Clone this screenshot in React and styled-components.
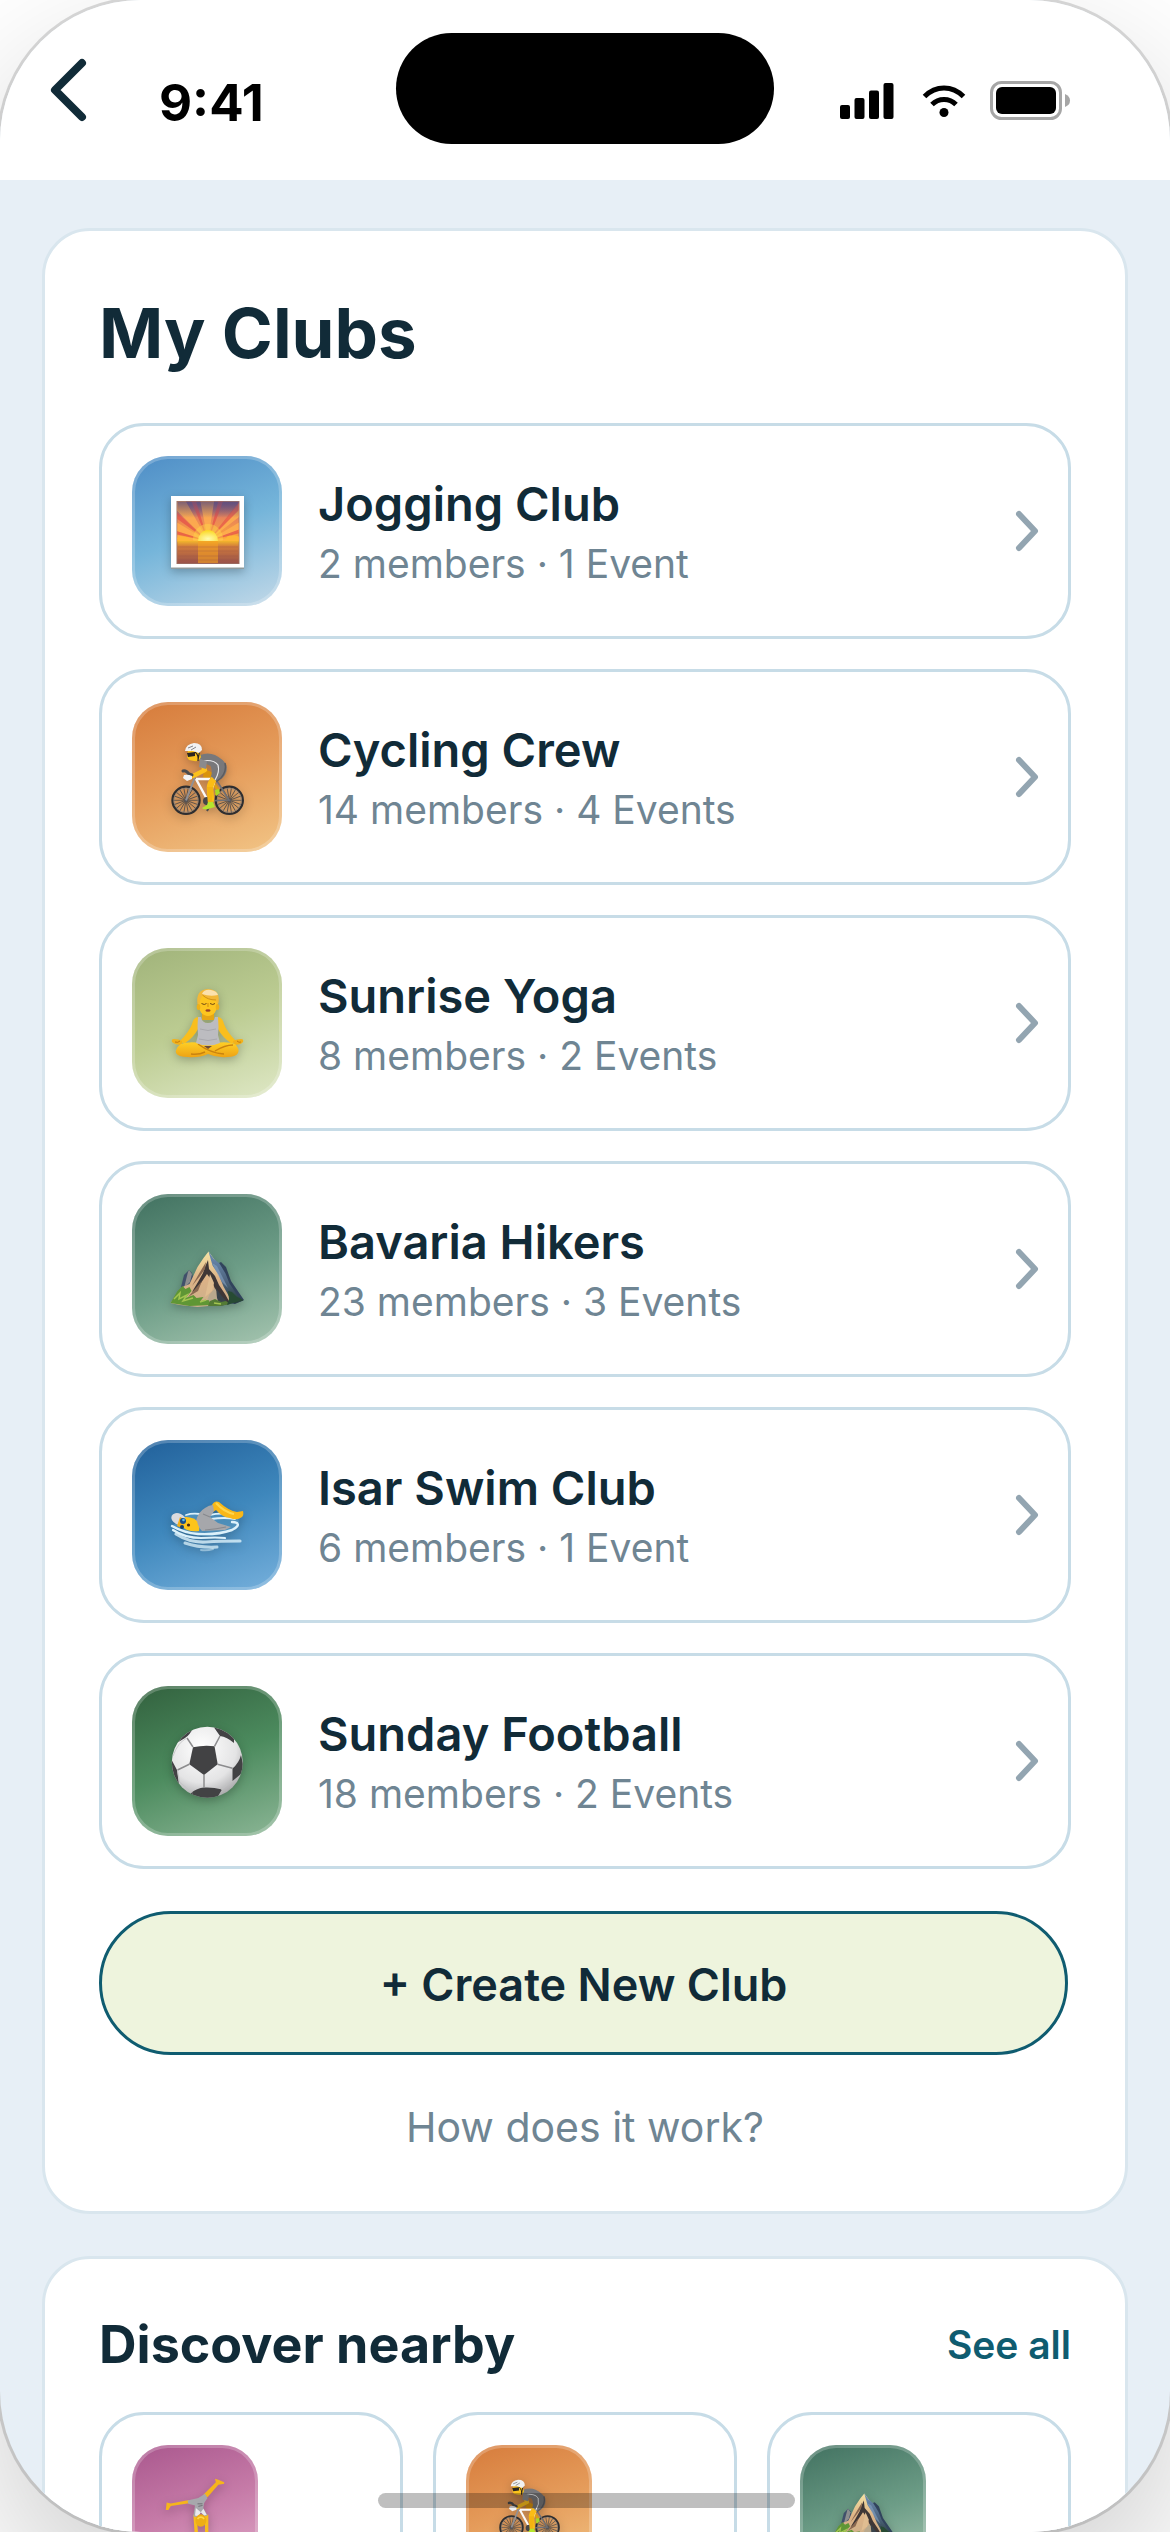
import React from 'react';
import styled, { createGlobalStyle } from 'styled-components';

const GlobalStyle = createGlobalStyle`
  * {
    box-sizing: border-box;
  }

  body {
    margin: 0;
    background: #fff;
    color: #112b38;
    font-family: Inter, "Liberation Sans", sans-serif;
  }

  h1, h2, p, ul {
    margin: 0;
    padding: 0;
  }

  svg {
    display: block;
    flex: none;
    overflow: visible;
  }
`;

const Backdrop = styled.div`
  height: 100vh;
  overflow: hidden;
  background: #fff;
`;

const Phone = styled.div`
  position: relative;
  display: flex;
  flex-direction: column;
  height: 100%;
  overflow: hidden;
  border-radius: 141px;
  background: #e7eff6;
  box-shadow: 0 0 0 3px rgba(0, 0, 0, 0.14), 0 60px 150px rgba(0, 0, 0, 0.2);
`;

const Header = styled.header`
  display: grid;
  grid-template-columns: 1fr 378px 1fr;
  flex: none;
  height: 180px;
  padding-top: 33px;
  background: #fff;
`;

const HeaderLeft = styled.div`
  display: flex;
  align-items: flex-start;
  gap: 63px;
  padding-left: 42px;
`;

const BackButton = styled.button`
  display: grid;
  place-items: center;
  width: 54px;
  height: 114px;
  padding: 0;
  border: 0;
  background: none;
  color: #112b38;
`;

const Time = styled.time`
  padding-top: 39px;
  font-size: 51px;
  font-weight: 700;
  line-height: 62px;
  color: #000;
`;

const Island = styled.div`
  height: 111px;
  border-radius: 56px;
  background: #000;
`;

const StatusIcons = styled.div`
  display: flex;
  align-items: center;
  gap: 27px;
  height: 135px;
  padding-left: 66px;
`;

const Scroller = styled.main`
  display: flex;
  flex-direction: column;
  gap: 42px;
  flex: 1;
  min-height: 0;
  padding: 48px 42px;
  overflow-y: auto;
  scrollbar-width: none;
`;

const Card = styled.section`
  flex: none;
  padding: ${(p) => (p.$compact ? '54px' : '60px 54px 54px')};
  border: 3px solid #d9e6ee;
  border-radius: 48px;
  background: #fff;
`;

const Title = styled.h1`
  font-size: 69px;
  font-weight: 700;
  line-height: 84px;
`;

const ClubList = styled.ul`
  display: flex;
  flex-direction: column;
  gap: 30px;
  margin: 48px 0 42px;
  list-style: none;
`;

const ClubRow = styled.button`
  display: flex;
  align-items: center;
  gap: 36px;
  width: 100%;
  padding: 30px;
  border: 3px solid #c7dce7;
  border-radius: 45px;
  background: #fff;
  color: inherit;
  font: inherit;
  text-align: left;
`;

const Tile = styled.span`
  display: grid;
  place-items: center;
  flex: none;
  width: ${(p) => p.$size}px;
  height: ${(p) => p.$size}px;
  border-radius: 36px;
  background: linear-gradient(160deg, ${(p) => p.$colors});
  box-shadow: inset 0 0 0 3px rgba(255, 255, 255, 0.22);

  svg {
    filter: drop-shadow(0 3px 5px rgba(0, 0, 0, 0.25));
  }
`;

const ClubText = styled.span`
  display: flex;
  flex-direction: column;
  flex: 1;
  min-width: 0;
`;

const ClubName = styled.span`
  font-size: 47px;
  font-weight: 600;
  line-height: 66px;
`;

const ClubMeta = styled.span`
  font-size: 39px;
  line-height: 54px;
  color: #6f8593;
`;

const CreateButton = styled.button`
  display: block;
  width: calc(100% - 3px);
  height: 144px;
  padding: 2px 0 0;
  border: 3px solid #0f5c70;
  border-radius: 72px;
  background: #eef4dd;
  color: #112b38;
  font-family: inherit;
  font-size: 45px;
  font-weight: 600;
`;

const HelpLink = styled.a`
  display: block;
  margin-top: 42px;
  font-size: 41px;
  line-height: 60px;
  text-align: center;
  text-decoration: none;
  color: #6f8593;
`;

const SectionHead = styled.div`
  display: flex;
  align-items: center;
  justify-content: space-between;
  margin-bottom: 36px;
`;

const SectionTitle = styled.h2`
  font-size: 52px;
  font-weight: 700;
  line-height: 63px;
`;

const SeeAll = styled.a`
  font-size: 39px;
  font-weight: 600;
  line-height: 54px;
  text-decoration: none;
  color: #0f5c70;
`;

const NearbyGrid = styled.div`
  display: grid;
  grid-template-columns: repeat(3, 1fr);
  gap: 30px;
`;

const NearbyCard = styled.button`
  display: flex;
  align-items: flex-start;
  min-height: 240px;
  padding: 30px;
  border: 3px solid #c7dce7;
  border-radius: 45px;
  background: #fff;
`;

const HomeBar = styled.div`
  position: absolute;
  bottom: 24px;
  left: 50%;
  width: 417px;
  height: 15px;
  margin-left: -207px;
  border-radius: 8px;
  background: rgba(0, 0, 0, 0.25);
`;

function Sunrise() {
  return (
    <>
      <defs>
        <linearGradient id="sky" x1="0" y1="0" x2="0" y2="1">
          <stop offset="0" stopColor="#6d5480" />
          <stop offset="0.4" stopColor="#e8845a" />
          <stop offset="1" stopColor="#ffab33" />
        </linearGradient>
        <linearGradient id="dusk" x1="0" y1="0" x2="0" y2="1">
          <stop offset="0" stopColor="#5f4d7c" stopOpacity="0.75" />
          <stop offset="1" stopColor="#5f4d7c" stopOpacity="0" />
        </linearGradient>
        <linearGradient id="sea" x1="0" y1="0" x2="0" y2="1">
          <stop offset="0" stopColor="#f2b52c" />
          <stop offset="0.25" stopColor="#d07a3c" />
          <stop offset="1" stopColor="#99524a" />
        </linearGradient>
        <radialGradient id="sun" cx="0.5" cy="0.8" r="0.8">
          <stop offset="0" stopColor="#fffbb0" />
          <stop offset="1" stopColor="#fbd61c" />
        </radialGradient>
        <clipPath id="skyClip">
          <path d="M6.300 6.800h61.400v39.500H6.300z" />
        </clipPath>
      </defs>
      <path d="M0 1h73v73H0z" fill="#8f9a9c" />
      <path d="M0 1h73v71.500H0z" fill="#fff" />
      <path d="M5.500 6h63v63h-63z" fill="#9b7065" />
      <path d="M6.300 6.800h61.400v40H6.300z" fill="url(#sky)" />
      <g clipPath="url(#skyClip)">
        <g fill="#ffb04f" opacity="0.8">
          <path d="M37 46 27-6h18zM37 46-2 8l10-14zM37 46 78-4l8 12zM37 46-12 30l4-11zM37 46 84 18l4 13zM37 46-12 43v-6zM37 46l52-8v6z" />
        </g>
        <g fill="#e4524a" opacity="0.75">
          <path d="M37 46 16-4h6zM37 46 50-4h6zM37 46-6 15l3-6zM37 46 72 2l5 4zM37 46-10 36l2-4zM37 46 80 30l1 5z" />
        </g>
        <path d="M6.300 6.800h61.400v16H6.300z" fill="url(#dusk)" />
        <circle cx="37" cy="44" r="15" fill="#ffd84a" opacity="0.45" />
      </g>
      <path d="M6.300 46v-3q3-3 6-1 4-1 6 2l5 2zM67.700 46v-4q-4-3-7-1-4-1-6 3l-4 2z" fill="#ffb637" />
      <path d="M6.300 46h61.400v22.300H6.300z" fill="url(#sea)" />
      <path d="M27 46h20v22H27z" fill="#f6a11f" opacity="0.6" />
      <path d="M7 52h60M7 56h60M7 61h60M7 65h60" stroke="#8d4c48" strokeWidth="0.700" opacity="0.4" />
      <path d="M27 46a10 11 0 0 1 20 0z" fill="url(#sun)" />
    </>
  );
}

function Wheel({ cx }) {
  const spokes = [0, 20, 40, 60, 80, 100, 120, 140, 160];
  return (
    <g transform={`translate(${cx} 59.300)`}>
      {spokes.map((angle) => (
        <path key={angle} d="M-13 0h26" stroke="#4e4a48" strokeWidth="0.800" transform={`rotate(${angle})`} />
      ))}
      <circle r="13.600" fill="none" stroke="#2e2e30" strokeWidth="2.200" />
      <circle r="12.100" fill="none" stroke="#85807d" strokeWidth="0.700" />
      <circle r="1.800" fill="#55555a" />
    </g>
  );
}

function Cyclist() {
  return (
    <>
      <Wheel cx={15} />
      <Wheel cx={58.3} />
      <path d="M33 29q6 0 9 4l-4 6-6-3z" fill="#d9930c" />
      <path d="m43 43 4 6-2 5" fill="none" stroke="#e0a010" strokeWidth="3" />
      <path d="m44 49 4-1 1 4-4 3z" fill="#a5d92a" />
      <path d="m46 40 12 19-21 1" fill="none" stroke="#707074" strokeWidth="1.600" />
      <path d="M24 36 15 59.300" stroke="#909094" strokeWidth="2" />
      <path d="m25 38 12 22M25 38h19l-7 22" fill="none" stroke="#fafafa" strokeWidth="2.400" />
      <circle cx="36" cy="60" r="4" fill="#464648" />
      <path d="m39 64-3 6" stroke="#4a4a4d" strokeWidth="2" />
      <path d="M29 14q8-3 15 0 8 4 11.500 10 1.500 8-4 13l-7 4-6-2q4-7 1-14l-11-5z" fill="#78787b" />
      <path d="M30 20q13-2 17 4 2 7-3 15" fill="none" stroke="#e9e9eb" strokeWidth="1.200" />
      <path d="M54 22q2 8-4 15l-5 4" fill="none" stroke="#5c5c60" strokeWidth="1.500" />
      <path d="m31 24 3 5-12 6" fill="none" stroke="#fcc11c" strokeWidth="4.300" strokeLinecap="round" strokeLinejoin="round" />
      <path d="m29 18 7 2-1 8-7-2z" fill="#8a8a8d" />
      <path d="M43 38q-4 4-4 9l1 14" fill="none" stroke="#fbbd16" strokeWidth="6.500" strokeLinejoin="round" />
      <path d="m36 46 1.500 16h3l2-16z" fill="#f0ab0e" opacity="0.6" />
      <path d="m37 61 5 0 2 5-7 2q-5 1-6-1l5-3z" fill="#b5e52d" />
      <path d="M12 30q3-1 6 3l3 1" fill="none" stroke="#4a4a4d" strokeWidth="3" strokeLinecap="round" />
      <path d="M13 34q4-1 8 1v3l-5 2-4-3z" fill="#f2f2f4" />
      <path d="M17 10h11l2 6q-2 5-7 4l-5-1-2-3z" fill="#fbc31d" />
      <path d="m16 12 8-1v4l-7 1z" fill="#2a2522" />
      <path d="M24 11q4 3 3 9M29 8l-2 11" fill="none" stroke="#2a2522" strokeWidth="1.200" />
      <path d="M14 10q1-7 9-8 8 0 8 7l-3 3-6-2z" fill="#f1f1f2" />
      <path d="m17 7 5-2M20 9l5-3" stroke="#77777a" strokeWidth="0.900" />
    </>
  );
}

function Yoga() {
  return (
    <>
      <defs>
        <linearGradient id="skin" x1="0" y1="0" x2="0" y2="1">
          <stop offset="0" stopColor="#ffcf25" />
          <stop offset="1" stopColor="#eea315" />
        </linearGradient>
      </defs>
      <path d="M31 25h12v8H31z" fill="#e6a615" />
      <path d="M27 30q-5 1-6 7-3 8-12 17l4 3q10-7 14-15zM47 30q5 1 6 7 3 8 12 17l-4 3q-10-7-14-15z" fill="#f9be1d" />
      <path d="M11 58q-7 0-10-3-1-3 2-3 5 0 8 2zM63 58q7 0 9-3 1-3-2-3-4 0-8 2z" fill="#f2b11a" />
      <path d="M4 55q3 1 5-1M66 54q2 2 4 1" fill="none" stroke="#c47a0d" strokeWidth="1" />
      <path d="M10 57q8-3 20-1h14q12-2 20 1 5 5 3 9-2 4-11 4-10 1-19-3-9 4-20 3-10 0-12-4-1-5 5-9z" fill="url(#skin)" />
      <path d="M33 59h8l-4 3z" fill="#6b4b3c" />
      <path d="M27 57q12 9 26 10M34 65q-6 3-14 2M62 58q-8 0-18 6" fill="none" stroke="#c98310" strokeWidth="1.400" />
      <path d="M27 30h3q1 6 7 6t7-6h3q1 10 0 18l2 8q-12 5-24 0l2-8q-1-9 0-18z" fill="#bcbcc0" />
      <path d="M29 42q8 3 16 0M28 52q9 3 18 0" fill="none" stroke="#a9a9ae" strokeWidth="1" />
      <ellipse cx="37" cy="16" rx="10" ry="13" fill="#fdc51f" />
      <ellipse cx="27.500" cy="20" rx="1.800" ry="3" fill="#eeb018" />
      <ellipse cx="46.500" cy="20" rx="1.800" ry="3" fill="#eeb018" />
      <path d="M26.500 17q-2-14 10-15 13 0 11 14l-1.500 1-1-4q-8 0-13-5-3 3-3.500 9z" fill="#f2b838" />
      <path d="M31 7q2-5 9-4 6 1 7 5-8 2-16-1z" fill="#fbe1ac" />
      <path d="M31.500 8q5 5 13.500 5" fill="none" stroke="#c98a18" strokeWidth="0.900" />
      <path d="M30.500 16.500q3 2 5 0M39 16.500q3 2 5 0" fill="none" stroke="#6e4713" strokeWidth="1" />
      <path d="M37 16v4" stroke="#d8950f" strokeWidth="1.200" />
      <ellipse cx="37" cy="23.500" rx="2.600" ry="1.300" fill="#9a4326" />
    </>
  );
}

function Mountain() {
  return (
    <>
      <defs>
        <linearGradient id="rock" x1="0" y1="0" x2="0" y2="1">
          <stop offset="0" stopColor="#f6e3a4" />
          <stop offset="0.5" stopColor="#dcb286" />
          <stop offset="1" stopColor="#cbb08c" />
        </linearGradient>
        <linearGradient id="slope" x1="0" y1="0" x2="0" y2="1">
          <stop offset="0" stopColor="#6d8fb5" />
          <stop offset="0.55" stopColor="#4f6580" />
          <stop offset="1" stopColor="#263c38" />
        </linearGradient>
      </defs>
      <path d="m10 54 3-12 5-5 3 3 3 12-8 12z" fill="#40506a" />
      <path d="m17 39 1-2 3 4-2 8-6 6z" fill="#8d8e8f" />
      <path d="m46 31 4-2 5 5 5 14 13 19-9 4-14-2z" fill="#31435c" />
      <path d="m-.500 70 7-10 5-6 7-3 8-17 6-9 5-6.500 7 9.500 10 18 6 14 4 6-16 6-22 2-18-2z" fill="url(#rock)" />
      <path d="m37.500 18.500 5 7 6 5 6 10 4 10 8 12 6 5-9 3-6-8-5-9-5-12-6-9-2-7z" fill="url(#slope)" />
      <path d="m41 30 5 3 5 10 6 12-6-6-4-7z" fill="#86a3c4" opacity="0.6" />
      <path d="m37 27 1 9 6 7 4 9 6 9 5 9-7 1-5-12-3-3-3-8-5-7-4 6-6 9-5 3 6-10 5-9 2-6z" fill="#3f3736" />
      <path d="m35 29-6 10-8 14 8-10 5-7zM31 48l-7 8-7 8 10-6z" fill="#8a6850" />
      <path d="m39 41 4 9-2 8-7 6z" fill="#e0bd91" />
      <path d="m44 55-6 7-3 9h14z" fill="#b9a98d" />
      <path d="m45 55 5 7 8 9-9 2-3-8z" fill="#39434a" />
      <path d="m-.500 70 7-12 5-5 3 3 4-2 2 4-6 7 8-3 3 3 7-1-3 4 8-1 3 5-22 1z" fill="#5f9635" />
      <path d="m39 68 5-2 6 3 5-1 4 3-10 2H37z" fill="#547b35" />
      <path d="m3 66 6-6-1 6 8-4-4 6 10-3M29 69l6-2M43 70l7 1" fill="none" stroke="#a3c451" strokeWidth="1.500" />
      <path d="m57 58 4 1 5 5 6 3-10 3-6 2 2-6z" fill="#274b33" />
    </>
  );
}

function Swimmer() {
  return (
    <>
      <path d="M14 36q26-3 50 1 6 4 3 9-6 8-26 11-22 0-40-10z" fill="#5ea5d2" opacity="0.55" />
      <g fill="none" stroke="#dcf1fa" strokeLinecap="round">
        <path d="M15 36q6-2 14-1M38 36q14-3 26 0" strokeWidth="1.800" />
        <path d="M40 40q14-2 24 0" strokeWidth="1.800" />
        <path d="M1 47q12 7 26 8 20 1 34-4 8-4 5-7-2-1-5-1" strokeWidth="2.400" />
        <path d="M2 51q12 8 28 8 16-1 24 0" strokeWidth="2.200" />
        <path d="M5 55q14 9 30 8 14-1 34-1" strokeWidth="3.200" opacity="0.8" />
        <path d="M14 64q14 5 32 4" strokeWidth="3" opacity="0.75" />
        <path d="M30 71q6 1 12-1" strokeWidth="2" opacity="0.5" />
      </g>
      <path d="M13 38q9-1 16 6l-1 8q-6 1-12-1l-8-5z" fill="#fcc41c" />
      <path d="M40 28q3-7 8-5 10 9 18 10l6-1q1 4-1 6-5 4-12 1-8-1-14-8l-6 4z" fill="#f9b718" />
      <path d="M45 24q8 9 18 11" fill="none" stroke="#ffd64b" strokeWidth="2" />
      <path d="M25 42q2-9 9-13 4-3 8-3l1 6-4 6 8 6 13 4-6 3-23 1q-4-4-5-10z" fill="#a6a7ab" />
      <path d="m39 38-7-3M34 51q12-1 21-3" fill="none" stroke="#88898e" strokeWidth="1.200" />
      <ellipse cx="7.500" cy="40" rx="7.500" ry="5.500" fill="#dadade" transform="rotate(25 7.500 40)" />
      <path d="m9 38 6 3-4 8-5-2z" fill="#f2ae18" />
      <circle cx="12" cy="42" r="3" fill="#174d8c" />
      <circle cx="12.500" cy="41" r="1.300" fill="#5fc0e8" />
      <circle cx="11" cy="48" r="2" fill="#163e6c" />
      <circle cx="17.500" cy="46" r="1.600" fill="#4b2a13" />
    </>
  );
}

function Football() {
  return (
    <>
      <defs>
        <radialGradient id="ball" cx="0.42" cy="0.3" r="0.75">
          <stop offset="0" stopColor="#fff" />
          <stop offset="0.65" stopColor="#e4e4e5" />
          <stop offset="1" stopColor="#a2a2a4" />
        </radialGradient>
        <clipPath id="ballClip">
          <circle cx="36.300" cy="37.300" r="35.500" />
        </clipPath>
      </defs>
      <circle cx="36.300" cy="37.300" r="35.500" fill="url(#ball)" />
      <g clipPath="url(#ballClip)">
        <g fill="#424244">
          <path d="M22 22.300q11-2.500 21.500-1l3.200 18L33 50 18.300 39.300z" />
          <path d="M22 3q-3 7-8 10l-10 6V0h18zM42 1l7 10q7 1 14 7V0zM70 30q-2 8-8.500 13.500V56l12-10zM-1 32l7 13 2 15-8-5zM20 68q6-5 13-5.500 9-.5 18 2l-6 10H20z" />
        </g>
        <path
          d="m22 22-6-9M43.500 21.300 49 11M46.500 39.300l15 4M33 50v13M18.300 39.300 6.500 45"
          stroke="#8c8c8e"
          strokeWidth="1.500"
        />
        <path d="m6.500 45 2 12 13 11M61 56 50 65M16 13Q7 17 2 31" fill="none" stroke="#c2c2c4" strokeWidth="0.800" />
      </g>
    </>
  );
}

function Gymnast() {
  return (
    <>
      <path d="M31 30 7 33.500l-3 5-3 0 1-9 5 1 22-4zM46 20l15-15-1-4 4 1 7 3v2l-7 1-13 15z" fill="#f5b51b" />
      <path d="m36 44 2 28M50 44v28" stroke="#f8bd1c" strokeWidth="4" />
      <path d="m27 27 13-3 8-5 3 5-4 6-1 6 5 9-4 1-4-5-5 6-4-1 2-13-8-2z" fill="#a7a7ac" />
      <path d="m37 36-1 9 4 1 3-5 4 4 3-1-4-7-3 4z" fill="#e9e9ed" />
      <path d="M39 31h6M40 34l5-1" stroke="#6f7075" strokeWidth="1.200" />
      <ellipse cx="43" cy="51" rx="6.500" ry="7.500" fill="#eead16" />
      <path d="M39 49q4-4 8 0" fill="none" stroke="#ffd648" strokeWidth="2" />
    </>
  );
}

const drawings = {
  sunrise: Sunrise,
  cyclist: Cyclist,
  yoga: Yoga,
  mountain: Mountain,
  swimmer: Swimmer,
  football: Football,
  gymnast: Gymnast,
};

const gradients = {
  sunrise: '#4e8dc6, #75b5da 50%, #c3d9e8',
  cyclist: '#d67b3b, #e59c5b 50%, #f2c586',
  yoga: '#a0b37a, #bccc92 50%, #dfe8c6',
  mountain: '#417160, #6d9d87 55%, #a6c5b0',
  swimmer: '#21609a, #3e87bc 50%, #76b0dc',
  football: '#32613e, #4c8b5e 50%, #8cb696',
  gymnast: '#a9578d, #c67ba8 50%, #e0aac8',
};

function ClubTile({ kind, size }) {
  const Drawing = drawings[kind];
  const glyph = size === 150 ? 72 : 60;
  return (
    <Tile $size={size} $colors={gradients[kind]}>
      <svg width={glyph} height={glyph} viewBox="0 0 72 72" aria-hidden="true">
        <Drawing />
      </svg>
    </Tile>
  );
}

const clubs = [
  { kind: 'sunrise', name: 'Jogging Club', meta: '2 members · 1 Event' },
  { kind: 'cyclist', name: 'Cycling Crew', meta: '14 members · 4 Events' },
  { kind: 'yoga', name: 'Sunrise Yoga', meta: '8 members · 2 Events' },
  { kind: 'mountain', name: 'Bavaria Hikers', meta: '23 members · 3 Events' },
  { kind: 'swimmer', name: 'Isar Swim Club', meta: '6 members · 1 Event' },
  { kind: 'football', name: 'Sunday Football', meta: '18 members · 2 Events' },
];

const nearby = ['gymnast', 'cyclist', 'mountain'];

function StatusBar() {
  return (
    <Header>
      <HeaderLeft>
        <BackButton aria-label="Back">
          <svg width="36" height="62" viewBox="0 0 36 62" fill="none" stroke="currentColor" strokeWidth="8" strokeLinecap="round" strokeLinejoin="round">
            <path d="M31 4 4 31l27 27" />
          </svg>
        </BackButton>
        <Time>9:41</Time>
      </HeaderLeft>
      <Island />
      <StatusIcons>
        <svg width="54" height="36" viewBox="0 0 54 36" aria-hidden="true">
          <rect x="0" y="22" width="10" height="14" rx="2" />
          <rect x="14.500" y="15" width="10" height="21" rx="2" />
          <rect x="29" y="7.500" width="10" height="28.500" rx="2" />
          <rect x="43.500" y="0" width="10" height="36" rx="2" />
        </svg>
        <svg width="42" height="32" viewBox="-2 0 42 32" fill="none" stroke="#000" strokeWidth="5" aria-hidden="true">
          <path d="M1.500 11.500Q10 3 21 3t19.500 8.500M9 19.500q5-5 12-5t12 5" />
          <circle cx="21" cy="27.500" r="4.500" fill="#000" stroke="none" />
        </svg>
        <svg width="81" height="39" viewBox="0 0 81 39" aria-hidden="true">
          <rect x="1.500" y="1.500" width="69" height="36" rx="10" fill="none" stroke="#a6a6a6" strokeWidth="3" />
          <rect x="6" y="6" width="60" height="27" rx="6" />
          <path d="M75 13q5 2 5 6.500T75 26z" fill="#a6a6a6" />
        </svg>
      </StatusIcons>
    </Header>
  );
}

function App() {
  return (
    <Backdrop>
      <GlobalStyle />
      <Phone>
        <StatusBar />
        <Scroller>
          <Card>
            <Title>My Clubs</Title>
            <ClubList>
              {clubs.map((club) => (
                <li key={club.name}>
                  <ClubRow>
                    <ClubTile kind={club.kind} size={150} />
                    <ClubText>
                      <ClubName>{club.name}</ClubName>
                      <ClubMeta>{club.meta}</ClubMeta>
                    </ClubText>
                    <svg width="24" height="42" viewBox="0 0 24 42" fill="none" stroke="#93a5b1" strokeWidth="6" strokeLinecap="round" strokeLinejoin="round" aria-hidden="true">
                      <path d="m5 4 16 17L5 38" />
                    </svg>
                  </ClubRow>
                </li>
              ))}
            </ClubList>
            <CreateButton>+ Create New Club</CreateButton>
            <HelpLink href="#help">How does it work?</HelpLink>
          </Card>
          <Card $compact>
            <SectionHead>
              <SectionTitle>Discover nearby</SectionTitle>
              <SeeAll href="#nearby">See all</SeeAll>
            </SectionHead>
            <NearbyGrid>
              {nearby.map((kind) => (
                <NearbyCard key={kind} aria-label={kind}>
                  <ClubTile kind={kind} size={126} />
                </NearbyCard>
              ))}
            </NearbyGrid>
          </Card>
        </Scroller>
        <HomeBar />
      </Phone>
    </Backdrop>
  );
}

export default App;
